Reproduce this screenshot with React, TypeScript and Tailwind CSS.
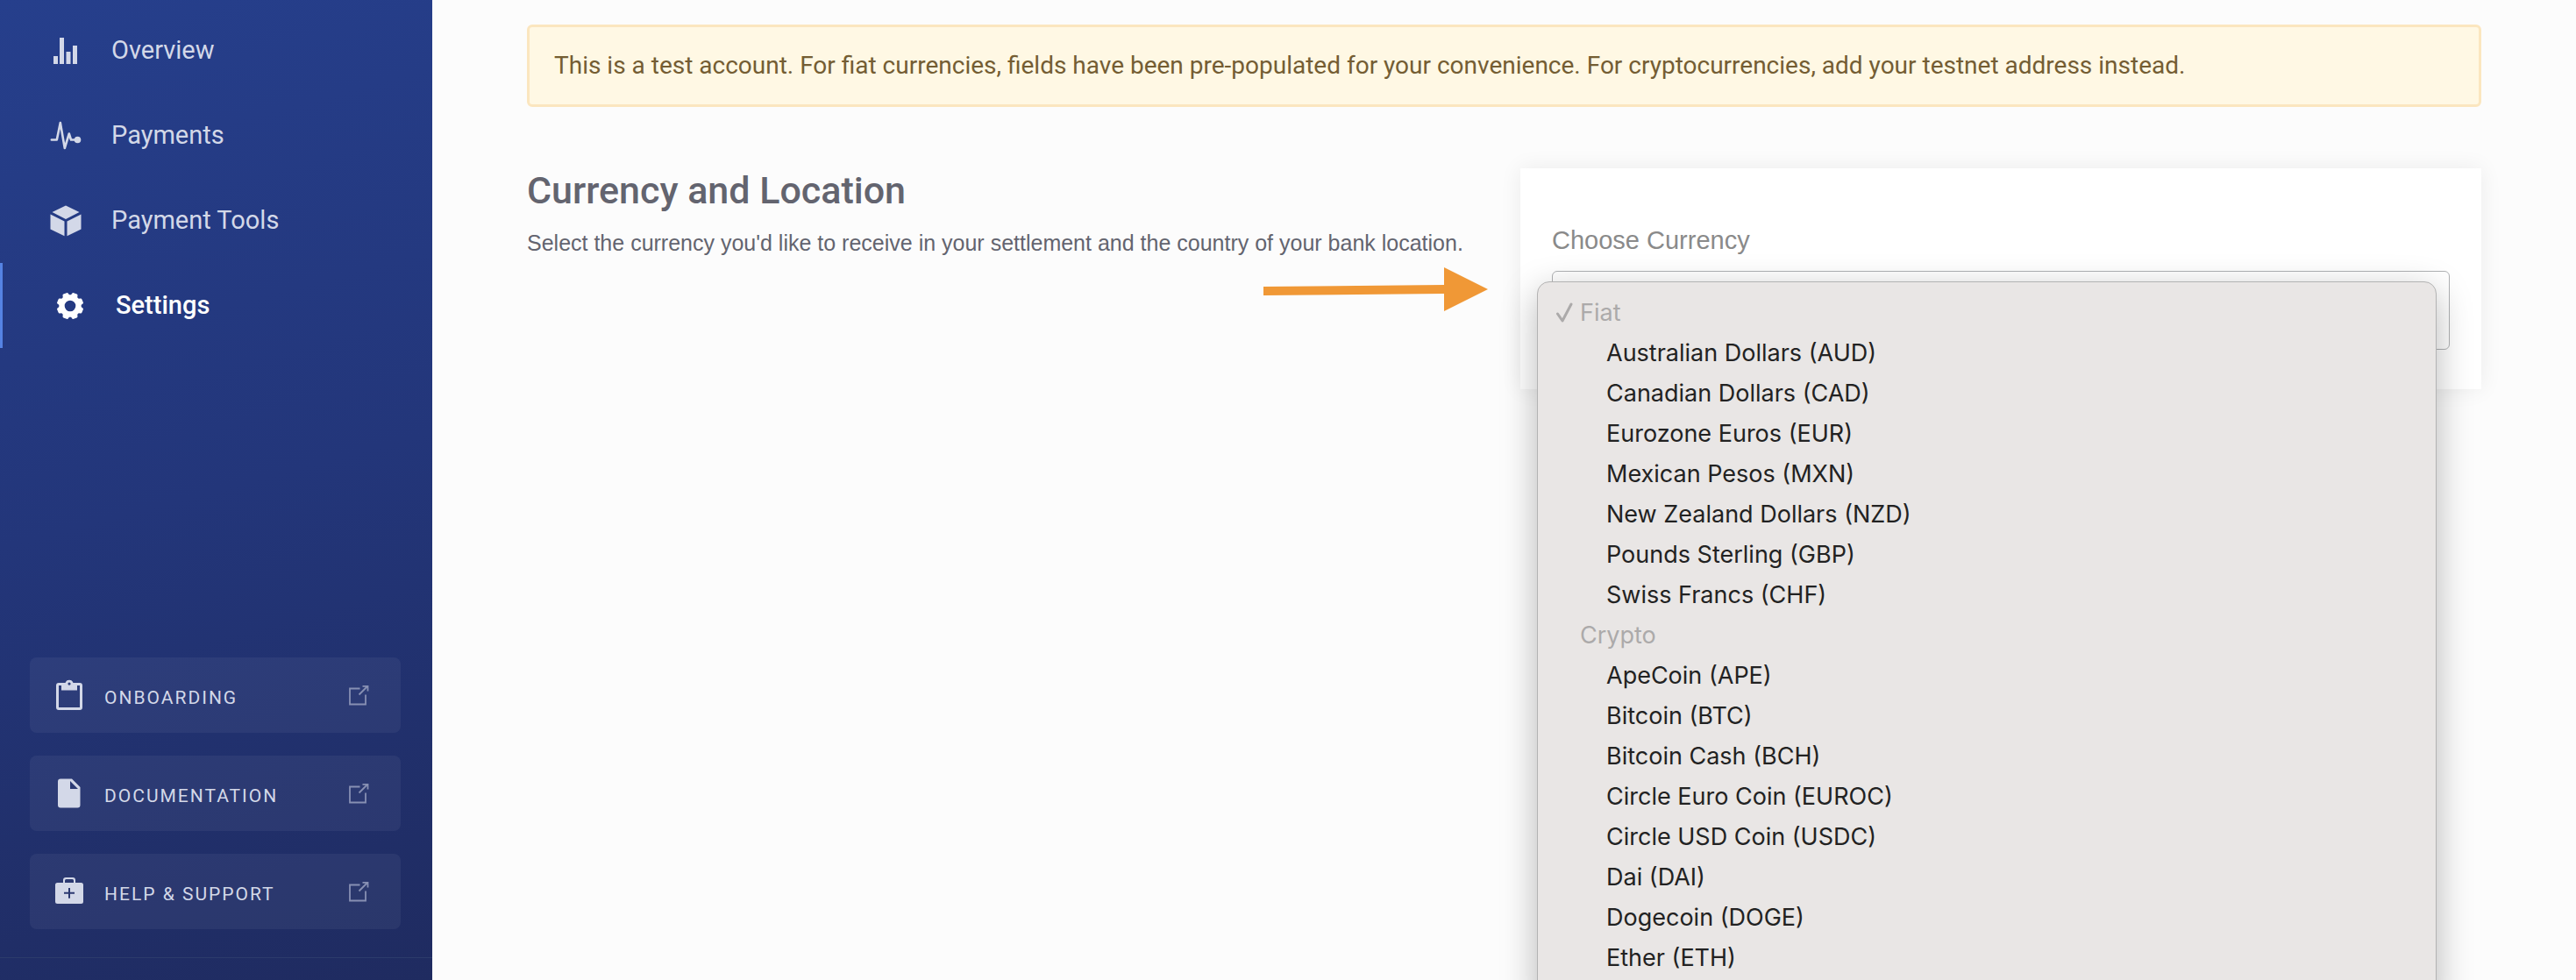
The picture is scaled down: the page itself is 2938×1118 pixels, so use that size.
import React from 'react';

const nav = [
  { label: 'Overview', icon: <OverviewIcon /> },
  { label: 'Payments', icon: <PulseIcon /> },
  { label: 'Payment Tools', icon: <CubeIcon /> },
  { label: 'Settings', icon: <GearIcon />, active: true },
];

const resources = [
  { label: 'Onboarding', icon: <ClipboardIcon /> },
  { label: 'Documentation', icon: <FileIcon /> },
  { label: 'Help & Support', icon: <KitIcon /> },
];

const fiat = [
  'Australian Dollars (AUD)',
  'Canadian Dollars (CAD)',
  'Eurozone Euros (EUR)',
  'Mexican Pesos (MXN)',
  'New Zealand Dollars (NZD)',
  'Pounds Sterling (GBP)',
  'Swiss Francs (CHF)',
];

const crypto = [
  'ApeCoin (APE)',
  'Bitcoin (BTC)',
  'Bitcoin Cash (BCH)',
  'Circle Euro Coin (EUROC)',
  'Circle USD Coin (USDC)',
  'Dai (DAI)',
  'Dogecoin (DOGE)',
  'Ether (ETH)',
];

function OverviewIcon() {
  return (
    <svg viewBox="0 0 36 36" className="size-9" fill="currentColor" aria-hidden="true">
      <path d="M4 24h5v9H4zM11 3h5v30h-5zM18.500 19h5v14h-5zM26 12h5v21h-5z" />
    </svg>
  );
}

function PulseIcon() {
  return (
    <svg viewBox="0 0 36 36" className="size-9" aria-hidden="true">
      <path
        d="M1.800 22.500h6L11.800 3 16.800 32 21.800 15.500 24 22.500h7"
        fill="none"
        stroke="currentColor"
        strokeWidth="2.600"
        strokeLinejoin="round"
        strokeLinecap="round"
      />
      <circle cx="31.500" cy="22.500" r="3.800" fill="currentColor" />
    </svg>
  );
}

function CubeIcon() {
  return (
    <svg viewBox="0 0 36 36" className="size-9" fill="currentColor" aria-hidden="true">
      <path d="M18 .5 33.500 8 18 16 2.500 8zM.5 10.500 16.500 18.500V35.300L.5 27.500zM35.500 10.500 19.500 18.500V35.300L35.500 27.500z" />
    </svg>
  );
}

function GearIcon() {
  const teeth = [22.5, 67.5, 112.5, 157.5, 202.5, 247.5, 292.5, 337.5];
  return (
    <svg viewBox="0 0 36 36" className="size-9" fill="currentColor" aria-hidden="true">
      <circle cx="18" cy="18" r="9.500" fill="none" stroke="currentColor" strokeWidth="6.400" />
      {teeth.map((angle) => (
        <path key={angle} d="M13.600 8 14.700 3.800Q15 2.700 16.100 2.700H19.900Q21 2.700 21.300 3.800L22.400 8z" transform={`rotate(${angle} 18 18)`} />
      ))}
    </svg>
  );
}

function ClipboardIcon() {
  return (
    <svg viewBox="0 0 36 36" className="size-9" fill="currentColor" fillRule="evenodd" aria-hidden="true">
      <path d="M6 4h7.500a4.700 4.700 0 0 1 9 0H30a3 3 0 0 1 3 3v25a3 3 0 0 1-3 3H6a3 3 0 0 1-3-3V7a3 3 0 0 1 3-3zM6 7v25h24V7h-3v5.500H9V7zM18 3.500a1.600 1.600 0 1 0 0 3.200 1.600 1.600 0 0 0 0-3.200z" />
    </svg>
  );
}

function FileIcon() {
  return (
    <svg viewBox="0 0 36 36" className="size-9" fill="currentColor" fillRule="evenodd" aria-hidden="true">
      <path d="M8 1.500h13L30.500 11v20.500a3 3 0 0 1-3 3H8a3 3 0 0 1-3-3v-27a3 3 0 0 1 3-3zM19 4v9h9z" />
    </svg>
  );
}

function KitIcon() {
  return (
    <svg viewBox="0 0 36 36" className="size-9" fill="currentColor" fillRule="evenodd" aria-hidden="true">
      <path d="M11 8V5a3 3 0 0 1 3-3h8a3 3 0 0 1 3 3v3h6.500a2.500 2.500 0 0 1 2.500 2.500v19a2.500 2.500 0 0 1-2.500 2.500h-27A2.500 2.500 0 0 1 2 29.500v-19A2.500 2.500 0 0 1 4.500 8zM13 8h10V5.500a1.500 1.500 0 0 0-1.500-1.500h-7A1.500 1.500 0 0 0 13 5.500zM17 14v4.800h-5v2h5v5h2v-5h5v-2h-5V14z" />
    </svg>
  );
}

function ExternalIcon() {
  return (
    <svg viewBox="0 0 24 24" className="size-6" fill="none" stroke="currentColor" strokeWidth="1.800" aria-hidden="true">
      <path d="M13.500 4.500H2V22.500H20V11.500M12.500 11.500 22 2M16.500 1.800H22.500V7.500" />
    </svg>
  );
}

function Option({ label }: { label: string }) {
  return (
    <button type="button" role="option" aria-selected="false" className="block h-[46px] w-full pl-[78px] text-left text-[#222222]">
      {label}
    </button>
  );
}

export default function App() {
  return (
    <div className="flex h-screen overflow-hidden bg-[#fcfcfc] font-[Roboto,sans-serif]">
      <aside className="flex w-[493px] shrink-0 flex-col bg-linear-[165deg] from-[#263f8c] via-[#23367a] to-[#1f2b60] text-[#d3d8e8]">
        <nav className="flex flex-col pt-[9px] text-[29px]">
          {nav.map((item) => (
            <a
              key={item.label}
              href="#"
              aria-current={item.active ? 'page' : undefined}
              className={
                item.active
                  ? 'flex h-[97px] items-center gap-[34px] border-l-3 border-[#5583e3] pl-[59px] font-medium text-white'
                  : 'flex h-[97px] items-center gap-[34px] pl-[57px]'
              }
            >
              {item.icon}
              <span>{item.label}</span>
            </a>
          ))}
        </nav>
        <div className="mt-auto flex flex-col gap-[26px] pr-9 pb-8 pl-[34px]">
          {resources.map((item) => (
            <a
              key={item.label}
              href="#"
              className="flex h-[86px] items-center rounded-lg bg-white/5 pr-9 pl-[27px] text-[21px] tracking-[2px] uppercase"
            >
              {item.icon}
              <span className="ml-[22px] flex-1 pt-2">{item.label}</span>
              <span className="text-[#8790b3]">
                <ExternalIcon />
              </span>
            </a>
          ))}
        </div>
        <div className="h-[26px] border-t border-[#2c3b6b]" />
      </aside>

      <main className="min-w-0 flex-1 px-[108px] pt-7">
        <p className="rounded-md border-3 border-[#fbe6bf] bg-[#fff8e4] px-7 py-[23px] text-[28px] leading-[42px] text-[#745d33]" role="status">
          This is a test account. For fiat currencies, fields have been pre-populated for your convenience. For
          cryptocurrencies, add your testnet address instead.
        </p>

        <section className="mt-[70px] grid grid-cols-2 gap-[37px]">
          <div>
            <h1 className="text-[43px] leading-[50px] font-medium text-[#63646f]">Currency and Location</h1>
            <p className="mt-[17px] font-['Liberation_Sans',sans-serif] text-[25px] leading-9 whitespace-nowrap text-[#63646f]">
              Select the currency you'd like to receive in your settlement and the country of your bank location.
            </p>
            <svg viewBox="0 0 256 50" className="mt-[10px] ml-auto h-[50px] w-64" fill="#f09836" aria-hidden="true">
              <path d="M0 22 206 20V0L256 25 206 50V30L0 32z" />
            </svg>
          </div>

          <div className="relative h-[252px] bg-white px-9 pt-[62px] font-['Liberation_Sans',sans-serif] shadow-[0_0_24px_rgba(0,0,0,0.07)]">
            <label htmlFor="currency" className="block text-[29px] leading-10 text-[#8a8a8a]">
              Choose Currency
            </label>
            <div className="relative mt-[15px]">
              <select id="currency" className="block h-[90px] w-full appearance-none rounded-md border border-[#b0b2b4] bg-white" />
              <div
                role="listbox"
                aria-label="Choose Currency"
                className="absolute -left-[17px] right-[15px] top-3 rounded-[14px] border border-[#b3b3b3] bg-[#e9e6e5] pt-3 pb-8 font-[Inter,sans-serif] text-[27px] leading-[46px] shadow-[0_12px_40px_rgba(0,0,0,0.28)]"
              >
                <div role="group" aria-label="Fiat">
                  <div className="flex items-center gap-2 pl-5 text-[#acaaaa]">
                    <svg viewBox="0 0 20 26" className="h-[26px] w-5" fill="none" stroke="currentColor" strokeWidth="3" strokeLinecap="round" strokeLinejoin="round" aria-hidden="true">
                      <path d="M2.500 14 8 22 18 3" />
                    </svg>
                    Fiat
                  </div>
                  {fiat.map((label) => (
                    <Option key={label} label={label} />
                  ))}
                </div>
                <div role="group" aria-label="Crypto">
                  <div className="pl-12 text-[#acaaaa]">Crypto</div>
                  {crypto.map((label) => (
                    <Option key={label} label={label} />
                  ))}
                </div>
              </div>
            </div>
          </div>
        </section>
      </main>
    </div>
  );
}
